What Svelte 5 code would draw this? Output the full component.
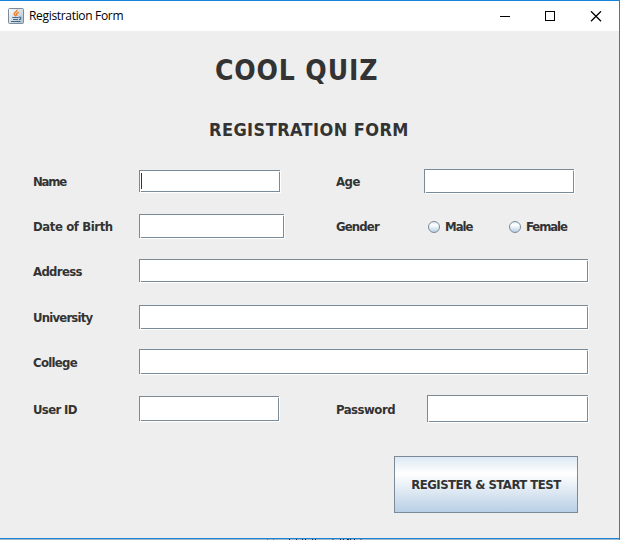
<script>
  const rows = [
    { height: 45, cells: [
      { label: 'Name', sp: -1.2, w: 141, h: 22, dy: 11, focus: true },
      { label: 'Age', sp: -0.5, x: 424, w: 150, h: 24, dy: 10 } ] },
    { height: 45, cells: [
      { label: 'Date of Birth', sp: -0.4, w: 145, h: 24, dy: 10 },
      { label: 'Gender', sp: -0.85, x: 428, options: [{ text: 'Male', sp: -1 }, { text: 'Female', sp: -1.1 }] } ] },
    { height: 46, cells: [{ label: 'Address', sp: -0.65, w: 449, h: 23, dy: 10 }] },
    { height: 45, cells: [{ label: 'University', sp: -0.8, w: 449, h: 24, dy: 10 }] },
    { height: 47, cells: [{ label: 'College', sp: -0.7, w: 449, h: 25, dy: 9 }] },
    { height: 45, cells: [
      { label: 'User ID', sp: -0.65, w: 140, h: 25, dy: 9 },
      { label: 'Password', sp: -0.5, x: 427, w: 161, h: 27, dy: 8 } ] }
  ];
</script>

<main class="window">
  <header class="titlebar">
    <svg class="java" width="16" height="16" viewBox="0 0 16 16">
      <defs>
        <linearGradient id="tile" x1="0" y1="0" x2="1" y2="1">
          <stop offset="0" stop-color="#fff" /><stop offset="1" stop-color="#aebdcb" />
        </linearGradient>
      </defs>
      <rect x=".5" y=".5" width="15" height="15" rx="1" fill="url(#tile)" stroke="#7b8d9d" />
      <path d="M9 1.800C9.800 3.800 5.500 4.300 6.300 6.300L8 8.300M10.800 4.300C8 5.300 8.300 6.300 9.300 7.500" fill="none" stroke="#ef7d22" stroke-width="1.400" />
      <path d="M4.200 9.500H10.500M5 11.500H10M10.800 9.200C13.800 8.700 13.300 11.300 11 11.700M3 13.500H12.500" fill="none" stroke="#426d91" stroke-width="1.100" />
    </svg>
    <span class="caption">Registration Form</span>
    <svg class="controls" width="103" height="11" viewBox="0 0 103 11" fill="none" stroke="#000">
      <path d="M0 5.500H10" />
      <rect x="45.500" y=".5" width="9" height="9" />
      <path d="M91 .3L101 10.300M101 .3L91 10.300" stroke-width="1.300" />
    </svg>
  </header>

  <form class="panel" onsubmit={(e) => e.preventDefault()}>
    <h1>COOL QUIZ</h1>
    <h2>REGISTRATION FORM</h2>
    <div class="rows">
      {#each rows as row}
        <div class="row" style:height="{row.height}px">
          {#each row.cells as cell, i}
            <div class="cell" class:second={i === 1}>
              <span class="label" style:width="{i ? cell.x - 336 : 106}px" style:letter-spacing="{cell.sp}px">{cell.label}</span>
              {#if cell.options}
                {#each cell.options as o}
                  <label class="option">
                    <span class="radio"></span>
                    <span style:letter-spacing="{o.sp}px">{o.text}</span>
                  </label>
                {/each}
              {:else}
                <div class="field" style:width="{cell.w}px" style:height="{cell.h}px" style:margin-top="{cell.dy}px">
                  {#if cell.focus}<i class="caret"></i>{/if}
                </div>
              {/if}
            </div>
          {/each}
        </div>
      {/each}
    </div>
    <button>REGISTER &amp; START TEST</button>
  </form>
  <footer>
    <svg width="96" height="1" viewBox="0 0 96 1" stroke="#262b45">
      <path d="M0 .5h1M6 .5h1M65 .5h2M93 .5h2" stroke="#6d8196" />
      <path d="M22 .5h1M29 .5h1M35 .5h1M38 .5h1M45 .5h1M48 .5h1M73 .5h1M76 .5h1M80 .5h2M83 .5h1M87 .5h1" />
    </svg>
  </footer>
</main>

<style>
  :global(body) { margin: 0; }
  .window {
    box-sizing: border-box;
    width: 620px;
    height: 540px;
    display: flex;
    flex-direction: column;
    overflow: hidden;
    border-top: 1px solid #1883d7;
    border-right: 1px solid #1883d7;
    background: #eee;
    color: #333;
    font-family: "DejaVu Sans Condensed", "DejaVu Sans", sans-serif;
    font-stretch: condensed;
  }
  .titlebar {
    height: 30px;
    flex: none;
    display: flex;
    align-items: center;
    background: #fff;
    color: #000;
  }
  .java { margin-left: 8px; }
  .caption { margin-left: 5px; font: 12px/16px "Open Sans", sans-serif; letter-spacing: -.32px; white-space: nowrap; }
  .controls { margin-left: auto; margin-right: 16px; }
  .panel {
    flex: 1;
    display: flex;
    flex-direction: column;
  }
  h1, h2 { margin: 0; white-space: nowrap; font-weight: 700; }
  h1 { margin: 20px 0 0 215px; font-size: 28px; line-height: 40px; letter-spacing: .85px; }
  h2 { margin: 26px 0 0 209px; font-size: 18px; line-height: 26px; letter-spacing: .43px; }
  .rows { margin-top: 16px; }
  .row { display: flex; position: relative; font-size: 13px; font-weight: 700; }
  .cell { display: flex; align-items: flex-start; margin-left: 33px; }
  .cell.second { position: absolute; left: 303px; top: 0; }
  .label { line-height: 45px; flex: none; white-space: nowrap; }
  .field {
    position: relative;
    box-sizing: border-box;
    border: 1px solid #7a8a99;
    background: #fff;
    box-shadow: 1px 1px 0 #fff;
  }
  .field::before, .field::after {
    content: "";
    position: absolute;
    width: 1px;
    height: 1px;
    background: #eee;
  }
  .field::before { left: 0; bottom: -1px; }
  .field::after { right: -1px; top: 0; }
  .caret { position: absolute; left: 1px; top: 2px; width: 1px; height: 16px; background: #333; }
  .option { display: flex; align-items: center; gap: 5px; width: 81px; height: 45px; line-height: 45px; }
  .radio {
    box-sizing: border-box;
    width: 12px;
    height: 12px;
    border: 1px solid #7a8a99;
    border-radius: 50%;
    background: linear-gradient(#dde8f3, #fff 30%, #b8cfe5);
  }
  button {
    box-sizing: border-box;
    width: 184px;
    height: 57px;
    margin: 24px 0 0 394px;
    padding: 0;
    border: 1px solid #7a8a99;
    border-radius: 0;
    background: linear-gradient(#dde8f3, #fff 30%, #b8cfe5);
    color: #333;
    font-family: inherit;
    font-stretch: condensed;
    font-size: 13px;
    font-weight: 700;
    line-height: 20px;
    letter-spacing: -.5px;
    white-space: nowrap;
  }
  footer { height: 1px; flex: none; border-top: 1px solid #1883d7; background: #a9b8c5; }
  footer svg { display: block; margin-left: 267px; }
</style>
